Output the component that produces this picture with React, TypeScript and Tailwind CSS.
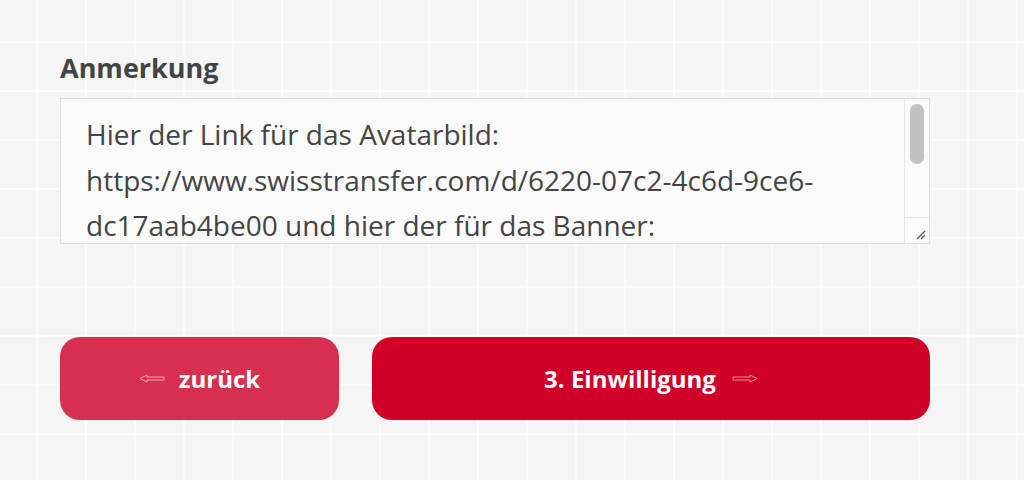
const ArrowLeft = () => (
    <svg width="26" height="9" viewBox="0 0 26 9" fill="none" className="shrink-0">
        <path d="M1 4.5 L8 1 L8 3 L25 3 L25 6 L8 6 L8 8 Z" stroke="#f4a3b3" strokeWidth="1" strokeLinejoin="round" />
    </svg>
)

const ArrowRight = () => (
    <svg width="26" height="9" viewBox="0 0 26 9" fill="none" className="shrink-0">
        <path d="M25 4.5 L18 1 L18 3 L1 3 L1 6 L18 6 L18 8 Z" stroke="#f08da1" strokeWidth="1" strokeLinejoin="round" />
    </svg>
)

const note =
    'Hier der Link für das Avatarbild: https://www.swisstransfer.com/d/6220-07c2-4c6d-9ce6-dc17aab4be00 und hier der für das Banner: https://www.swisstransfer.com/d/3f1a-88b2-41e0-a7c4-52de90bb7a11'

const App = () => {
    return (
        <div className="min-h-screen w-full bg-[#f5f5f5] bg-[linear-gradient(to_right,#fbfbfb_2px,transparent_2px),linear-gradient(to_bottom,#fbfbfb_2px,transparent_2px)] bg-size-[49px_49px] bg-position-[36px_41px] font-['Open_Sans',sans-serif] text-[#444]">
            <div className="pl-[60px] pr-[94px] pt-[50px]">
                <div className="text-[27px] font-bold leading-[36px] mb-[12px]">Anmerkung</div>

                <div className="flex h-[146px] border border-[#dcdcdc] bg-[#fafafa]">
                    <div className="flex-1 overflow-hidden pl-[25px] pr-[20px] pt-[13px] text-[28px] leading-[45.5px]">
                        {note}
                    </div>
                    <div className="w-[25px] flex flex-col border-l border-[#e6e6e6]">
                        <div className="flex-1 pt-[5px] px-[5px]">
                            <div className="h-[60px] rounded-full bg-[#c1c1c1]" />
                        </div>
                        <div className="h-[26px] border-t border-[#e6e6e6] flex items-end justify-end p-[3px]">
                            <svg width="12" height="12" viewBox="0 0 12 12">
                                <path d="M11 3 L3 11 M11 7 L7 11" stroke="#555" strokeWidth="1.3" />
                            </svg>
                        </div>
                    </div>
                </div>

                <div className="flex gap-[33px] mt-[93px]">
                    <button className="flex-[1] h-[83px] rounded-[20px] bg-[#d72f4f] flex items-center justify-center gap-[14px] text-white text-[24px] font-bold">
                        <ArrowLeft />
                        <span>zurück</span>
                    </button>
                    <button className="flex-[2] h-[83px] rounded-[20px] bg-[#d10028] flex items-center justify-center gap-[16px] text-white text-[24px] font-bold">
                        <span>3. Einwilligung</span>
                        <ArrowRight />
                    </button>
                </div>
            </div>
        </div>
    )
}

export default App
